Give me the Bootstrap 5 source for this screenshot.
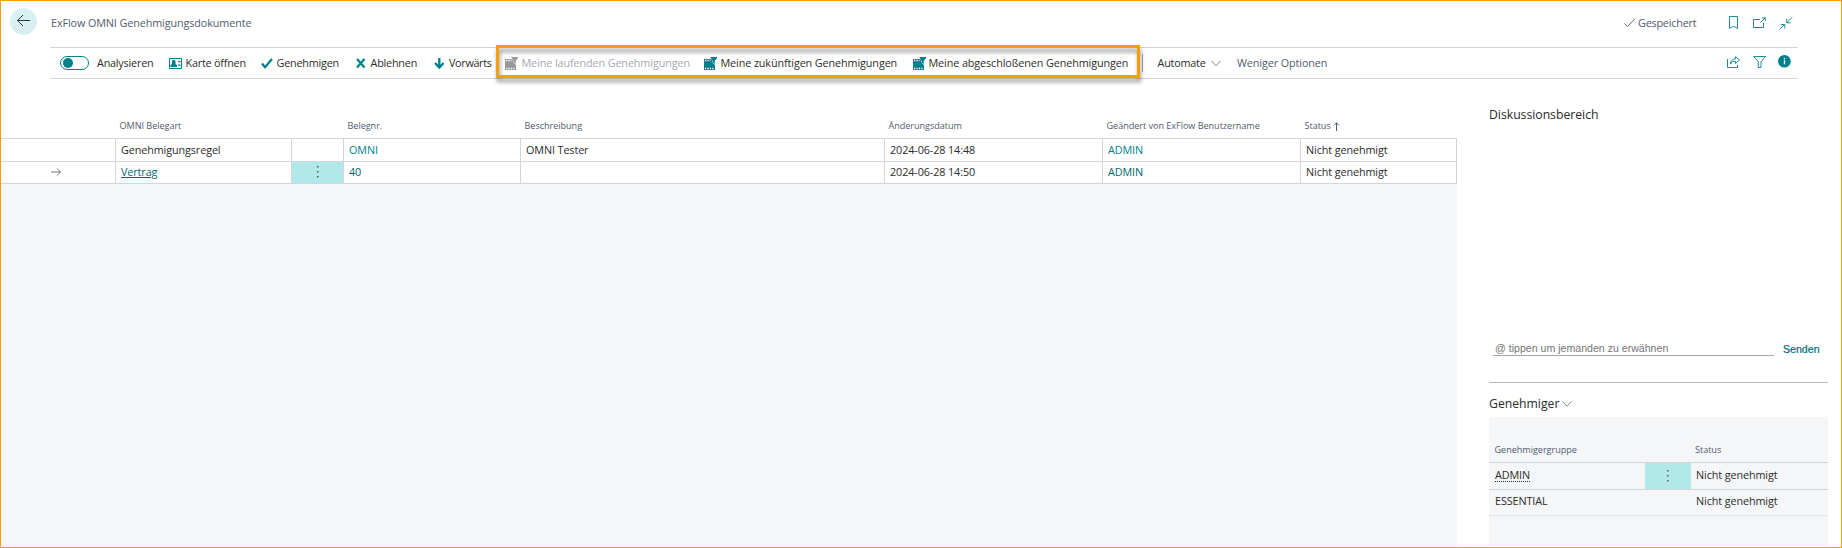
<!DOCTYPE html>
<html lang="de">
<head>
<meta charset="utf-8">
<title>ExFlow OMNI Genehmigungsdokumente</title>
<link href="https://cdn.jsdelivr.net/npm/bootstrap@5.3.0/dist/css/bootstrap.min.css" rel="stylesheet">
<style>
:root{--teal:#00808a;--ink:#2b2b2b;--slate:#505c6d;--rule:#d2d5da;--pane:#f5f6f8;--frame:#f5a000}
body{font:10.8px/16px "Open Sans",sans-serif;color:var(--ink);background:#fff;letter-spacing:-.1px}
.page{width:1842px;height:548px;border:1px solid var(--frame)}
.tight{letter-spacing:-.2px}.tighter{letter-spacing:-.32px}
.slate{color:var(--slate)}.teal{color:var(--teal)}
svg{display:block;flex:none;overflow:visible}
.topbar{height:46px;padding-left:9px}
.back{width:27px;height:27px;background:#d9f0f2;margin-top:7px;padding:6px 0 0 7px}
.page-title{margin:14px 0 0 14px}
.saved{margin:14px 42px 0 auto}
.tools{display:grid;grid-template-columns:109px 92px 95px 78px 71px 199px 209px 229px 16px 53.5px 26px 490px 26px 25px 1fr;height:32px;width:1748px;margin-left:49px;border-top:1px solid var(--rule);border-bottom:1px solid var(--rule);padding-left:9.5px;align-items:center}
.tools>div{white-space:nowrap;height:30px}
.tools span{margin-top:-1px}
.toggle{width:29px;height:14px;border:1px solid var(--teal);border-radius:7px;padding:1px 2px;margin-right:8.5px}
.toggle i{display:block;width:10px;height:10px;border-radius:50%;background:var(--teal)}
.frame{left:495px;top:44px;width:644px;height:33px;border:3px solid var(--frame);filter:drop-shadow(1px 4px 2px rgba(0,0,0,.42))}
.grid-main{width:1456px}
.gridtbl{table-layout:fixed;border-collapse:collapse}
.gridtbl th{font-size:9.1px;line-height:14px;font-weight:400;letter-spacing:-.04px;color:var(--slate);padding:0 0 0 4px;white-space:nowrap}
.gridtbl td{padding:0 0 0 5px;white-space:nowrap}
.doclist thead th{height:59px;vertical-align:bottom;padding-bottom:5px}
.doclist td{border:1px solid var(--rule)}
.doclist td:first-child{border-left:0}
.doclist td.menu,.apprlist td.menu{background:#b1e9eb;padding:0}
.pane{background:var(--pane)}
.facts{width:339px;margin-left:32px}
.facts h2{font-size:12.25px;line-height:18px;font-weight:400;letter-spacing:-.03px}
.chat{font-family:"Liberation Sans",sans-serif;font-size:10.6px;letter-spacing:0;height:44px}
.mention{width:281px;margin-left:4px;height:16px;border-bottom:1px solid #a6a6a6;color:#757575;padding-left:2px;line-height:17px}
.approvers{height:129px;border-top:0}
.apprlist th{height:45px;vertical-align:bottom;padding:0 0 5px 5.5px!important}
.apprlist td{padding:0 0 2px 6px;border-top:1px solid var(--rule)}
.apprlist tr:last-child td{border-bottom:1px solid #e4e6e9}
.dotted{text-decoration:underline dotted;text-underline-offset:2px}
</style>
</head>
<body class="m-0">
<svg class="d-none"><defs>
<g id="film"><path d="M0 2h9l2 3v8H0z"/><path d="M6 0h7v1l-2.500 3v3.500l-1.600-1.600V4z" stroke="#fff" stroke-width=".6"/><path d="M6.300 0H13v1l-2.500 3v3l-1.500-1.500V4z"/><path d="M1 3.500h5.500M1 11.500h9" stroke="#fff" stroke-width="1.300" stroke-dasharray="1.300 1.100"/></g>
</defs></svg>
<div class="page position-relative overflow-hidden">
 <header class="topbar d-flex align-items-start">
  <div class="back rounded-circle"><svg width="14" height="13" fill="none" stroke="#333" stroke-width="1"><path d="M.5 6.500H13M6 1 .5 6.500 6 12"/></svg></div>
  <div class="page-title slate">ExFlow OMNI Genehmigungsdokumente</div>
  <div class="saved d-flex align-items-center slate tight">
   <svg width="12" height="10" fill="none" stroke="#505c6d" stroke-width=".9"><path d="M.5 5.500 3.500 8.500 11 .8"/></svg><span style="margin-left:2px;width:91px">Gespeichert</span>
   <svg width="9" height="14" fill="none" stroke="#00808a" stroke-width=".9"><path d="M.5.500h8v12L6.300 11H5L4.500 10.500 4 11H2.700L.5 12.500z"/></svg>
   <svg class="ms-3" width="12" height="12" fill="none" stroke="#00808a" stroke-width=".9" viewBox="1 0 12 12"><path d="M7 2.500H.5v8h10V6M7.500 5.500 12 1M9 .8h3.300V4"/></svg>
   <svg style="margin-left:13px" width="20" height="13" fill="none" stroke="#00808a" stroke-width=".9"><path d="M13 .5 8 5.500M7.700 1.800v4h4M.5 12.500l5-5M1.800 7.500h4v4"/></svg>
  </div>
 </header>
 <nav class="tools">
  <div class="d-flex align-items-center tight"><b class="toggle"><i></i></b><span>Analysieren</span></div>
  <div class="d-flex align-items-center tight"><svg width="13" height="11" style="margin-right:4px"><path fill="#fff" stroke="#00808a" d="M.5.500h12v10H.5z"/><path fill="#00808a" d="M1.500 9V7l1.500-1V3l1-1h1.500l1 1v3L8 7v2zM9 3h2.500v1.200H9zM9 6.500h2.500v1.200H9z"/></svg><span>Karte öffnen</span></div>
  <div class="d-flex align-items-center tight"><svg width="12" height="11" style="margin-right:4px" fill="none" stroke="#00808a" stroke-width="2.200"><path d="M1 5.500 4 9.200 11 1"/></svg><span>Genehmigen</span></div>
  <div class="d-flex align-items-center tight"><svg width="10" height="10" style="margin-right:5px" fill="none" stroke="#00808a" stroke-width="2.200"><path d="m1 1 7.500 8.500M8.500 1 1 9.500"/></svg><span>Ablehnen</span></div>
  <div class="d-flex align-items-center tighter"><svg width="11" height="11" style="margin-right:4.500px" fill="none" stroke="#00808a" stroke-width="2.300"><path d="M5.300 0v9M1 5l4.300 4.500L9.600 5"/></svg><span>Vorwärts</span></div>
  <div class="d-flex align-items-center" style="color:#a3a9b2"><svg width="13" height="13" style="margin-right:4px" fill="#999"><use href="#film"/></svg><span>Meine laufenden Genehmigungen</span></div>
  <div class="d-flex align-items-center"><svg width="13" height="13" style="margin-right:4px" fill="#00808a"><use href="#film"/></svg><span>Meine zukünftigen Genehmigungen</span></div>
  <div class="d-flex align-items-center"><svg width="13" height="13" style="margin-right:3px" fill="#00808a"><use href="#film"/></svg><span>Meine abgeschloßenen Genehmigungen</span></div>
  <div class="d-flex align-items-center"><svg width="1" height="18"><path fill="#a3a9b2" d="M0 0h1v18H0z"/></svg></div>
  <div class="d-flex align-items-center tight"><span>Automate</span></div>
  <div class="d-flex align-items-center"><svg width="10" height="7" fill="none" stroke="#777" stroke-width=".9"><path d="m.5.800 4.500 5 4.500-5"/></svg></div>
  <div class="d-flex align-items-center slate"><span>Weniger Optionen</span></div>
  <div class="pt-2"><svg width="13" height="12" fill="none" stroke="#00808a" stroke-width=".9"><path d="M.5 3v8.500h10V9M8.500.800 12.500 4 8.500 7.500V5.300C6 5.200 4.300 6.200 3.300 8.200 3.500 5 5.500 3 8.500 2.800z"/></svg></div>
  <div class="pt-2"><svg width="13" height="12" fill="none" stroke="#00808a" stroke-width=".9"><path d="M.7.500h11.800L8 5.800v5.700H5.300V5.800z"/></svg></div>
  <div style="padding-top:7px"><svg width="13" height="13"><circle cx="6.400" cy="6.300" r="6.300" fill="#00808a"/><path d="M5.800 5.300h1.300v4H5.800zM5.800 3h1.300v1.300H5.800z" fill="#fff"/></svg></div>
 </nav>
 <div class="frame position-absolute"></div>
 <main class="d-flex" style="height:468px">
  <section class="grid-main d-flex flex-column">
   <table class="gridtbl doclist w-100">
    <colgroup><col style="width:114.500px"><col style="width:176px"><col style="width:52px"><col style="width:177px"><col style="width:364px"><col style="width:218px"><col style="width:198px"><col></colgroup>
    <thead><tr><th></th><th>OMNI Belegart</th><th></th><th>Belegnr.</th><th>Beschreibung</th><th>Änderungsdatum</th><th>Geändert von ExFlow Benutzername</th><th>Status<svg class="d-inline-block" width="7" height="9" style="margin-left:2px" fill="none" stroke="#505c6d"><path d="M3.500 9V.8M1 3.300 3.500.800 6 3.300"/></svg></th></tr></thead>
    <tbody>
     <tr style="height:23px"><td></td><td>Genehmigungsregel</td><td></td><td class="teal">OMNI</td><td>OMNI Tester</td><td>2024-06-28 14:48</td><td class="teal">ADMIN</td><td>Nicht genehmigt</td></tr>
     <tr style="height:22px"><td><svg width="10" height="8" style="margin-left:44.500px" fill="none" stroke="#666" stroke-width=".9"><path d="M0 4h9.500M6 .5 9.500 4 6 7.500"/></svg></td><td><u style="color:#00666e">Vertrag</u></td><td class="menu"><svg width="2" height="12" class="mx-auto" fill="#555"><path d="M0 0h1.500v1.500H0zM0 5h1.500v1.500H0zM0 10h1.500v1.500H0z"/></svg></td><td style="color:#00666e">40</td><td></td><td>2024-06-28 14:50</td><td style="color:#00666e">ADMIN</td><td>Nicht genehmigt</td></tr>
    </tbody>
   </table>
   <div class="pane flex-grow-1"></div>
  </section>
  <aside class="facts">
   <h2 class="m-0" style="padding-top:27px;height:261px">Diskussionsbereich</h2>
   <div class="chat d-flex"><div class="mention">@ tippen um jemanden zu erwähnen</div><div style="margin-left:9px;line-height:18px;color:#006d75;-webkit-text-stroke:.2px">Senden</div></div>
   <div class="d-flex" style="border-top:1px solid #b4bac4;height:35px;padding-top:12px;margin-top:-2px"><h2 class="m-0">Genehmiger</h2><svg width="10" height="6" style="margin:6px 0 0 3px" fill="none" stroke="#777" stroke-width=".9"><path d="m.5.500 4.500 4.700L9.500.500"/></svg></div>
   <div class="approvers pane">
    <table class="gridtbl apprlist w-100">
     <colgroup><col style="width:156px"><col style="width:46px"><col></colgroup>
     <thead><tr><th>Genehmigergruppe</th><th></th><th style="padding-left:4px!important">Status</th></tr></thead>
     <tbody>
      <tr style="height:27px"><td><span class="dotted">ADMIN</span></td><td class="menu"><svg width="2" height="12" class="mx-auto" fill="#555"><path d="M0 0h1.500v1.500H0zM0 5h1.500v1.500H0zM0 10h1.500v1.500H0z"/></svg></td><td style="padding-left:5px">Nicht genehmigt</td></tr>
      <tr style="height:26px"><td>ESSENTIAL</td><td></td><td style="padding-left:5px">Nicht genehmigt</td></tr>
     </tbody>
    </table>
   </div>
  </aside>
 </main>
</div>
<script src="https://cdn.jsdelivr.net/npm/bootstrap@5.3.0/dist/js/bootstrap.bundle.min.js"></script>
</body>
</html>
